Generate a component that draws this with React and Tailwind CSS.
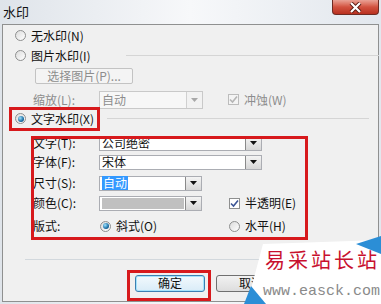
const FONT = { fontFamily: '"Noto Sans CJK SC", "Liberation Sans", sans-serif' };

function Radio({ checked }) {
  return (
    <span className="w-[11px] h-[11px] rounded-full border border-[#8e8f8f] bg-gradient-to-br from-[#dcdcdc] to-[#ffffff] flex items-center justify-center shrink-0">
      {checked && (
        <span className="w-[6px] h-[6px] rounded-full bg-[radial-gradient(circle_at_35%_35%,#9ee3ff,#1d6fa5_60%,#0b3f66)]" />
      )}
    </span>
  );
}

function Check({ checked, disabled }) {
  return (
    <span
      className={
        'w-[11px] h-[11px] border flex items-center justify-center shrink-0 ' +
        (disabled ? 'border-[#bcbcbc] bg-[#f4f4f4]' : 'border-[#8e8f8f] bg-white')
      }
    >
      {checked && (
        <svg width="9" height="9" viewBox="0 0 9 9">
          <path
            d="M1 4.5 L3.5 7 L8 1.5"
            fill="none"
            stroke={disabled ? '#b5b5b5' : '#3c5596'}
            strokeWidth="1.6"
          />
        </svg>
      )}
    </span>
  );
}

function Arrow({ disabled }) {
  return (
    <span
      className={
        'w-[16px] h-full border-l flex items-center justify-center shrink-0 ' +
        (disabled
          ? 'border-[#d0d0d0] bg-[#f2f2f2]'
          : 'border-[#8a8a8a] bg-gradient-to-b from-[#f4f4f4] to-[#d6d6d6]')
      }
    >
      <svg width="7" height="4" viewBox="0 0 7 4">
        <path d="M0 0 H7 L3.5 4 Z" fill={disabled ? '#a8a8a8' : '#111'} />
      </svg>
    </span>
  );
}

function Combo({ width, height = 15, children, disabled }) {
  return (
    <div
      className={
        'flex items-stretch border shrink-0 ' +
        (disabled ? 'border-[#c9c9c9] bg-[#f7f7f7]' : 'border-[#abadb3] bg-white')
      }
      style={{ width, height }}
    >
      <div className="flex-1 flex items-center pl-[2px] whitespace-nowrap leading-[12px]">{children}</div>
      <Arrow disabled={disabled} />
    </div>
  );
}

export default function App() {
  return (
    <div
      className="w-[381px] h-[304px] relative overflow-hidden bg-gradient-to-r from-[#dfe4ea] via-[#f7f8fa] to-[#e2e7ed] text-[12px] leading-none text-[#111] whitespace-nowrap"
      style={FONT}
    >
      {/* title bar */}
      <div className="h-[24px] flex justify-between items-start">
        <span className="pl-[3px] pt-[5px] text-[13px]">水印</span>
        <div className="mr-[2px] w-[47px] h-[15px] rounded-b-[4px] border border-t-0 border-[#6e2a22] bg-gradient-to-b from-[#e9a195] via-[#d2513f] to-[#b8301f] flex items-center justify-center">
          <svg width="13" height="11" viewBox="0 0 13 11">
            <path d="M2 1 L11 10 M11 1 L2 10" stroke="#5a1a12" strokeWidth="4" />
            <path d="M2 1 L11 10 M11 1 L2 10" stroke="#fff" strokeWidth="2.2" />
          </svg>
        </div>
      </div>

      {/* panel */}
      <div className="mx-[2px] h-[278px] border border-[#8f9090] bg-[#f0f0f0] flex flex-col">
        <div className="mt-[2px] h-[18px] flex items-center pl-[12px] gap-[5px]">
          <Radio />
          <span>无水印(N)</span>
        </div>

        <div className="mt-[2px] h-[18px] flex items-center pl-[12px] gap-[5px]">
          <Radio />
          <span className="shrink-0">图片水印(I)</span>
          <div className="ml-[30px] w-[253px] h-[2px] border-t border-[#d5d5d5] border-b-white shrink-0" />
        </div>

        <div className="mt-[3px] h-[16px] ml-[32px] w-[98px] border border-[#c3c3c3] rounded-[2px] bg-[#f4f4f4] flex items-center justify-center text-[#8d8d8d]">
          选择图片(P)...
        </div>

        <div className="mt-[7px] h-[18px] flex items-center">
          <span className="ml-[30px] w-[66px] text-[#8d8d8d] shrink-0">缩放(L):</span>
          <Combo width={104} height={18} disabled>
            <span className="text-[#8d8d8d]">自动</span>
          </Combo>
          <div className="ml-[25px] flex items-center gap-[5px] text-[#8d8d8d]">
            <Check checked disabled />
            <span>冲蚀(W)</span>
          </div>
        </div>

        <div className="mt-[1px] h-[18px] flex items-center">
          <div className="ml-[9px] w-[85px] h-full flex items-center pl-[3px] gap-[5px] outline-[3px] outline-solid outline-[#d7191c] shrink-0">
            <Radio checked />
            <span>文字水印(X)</span>
          </div>
          <div className="ml-[10px] w-[262px] border-t border-[#d5d5d5] shrink-0" />
        </div>

        {/* text watermark group */}
        <div className="mt-[8px] ml-[28px] w-[277px] h-[105px] flex flex-col outline-[3px] outline-solid outline-offset-[-3px] outline-[#d7191c]">
          <div className="h-[15px] flex items-center">
            <span className="pl-[2px] w-[68px] shrink-0">文字(T):</span>
            <Combo width={163}>公司绝密</Combo>
          </div>
          <div className="mt-[4px] h-[15px] flex items-center">
            <span className="pl-[2px] w-[68px] shrink-0">字体(F):</span>
            <Combo width={163}>宋体</Combo>
          </div>
          <div className="mt-[6px] h-[15px] flex items-center">
            <span className="pl-[2px] w-[68px] shrink-0">尺寸(S):</span>
            <Combo width={103}>
              <span className="bg-[#3399ff] text-white px-[1px] py-[1px]">自动</span>
            </Combo>
          </div>
          <div className="mt-[5px] h-[15px] flex items-center">
            <span className="pl-[2px] w-[68px] shrink-0">颜色(C):</span>
            <Combo width={103}>
              <span className="w-full h-[11px] mr-[1px] bg-[#c0c0c0]" />
            </Combo>
            <div className="ml-[27px] flex items-center gap-[5px]">
              <Check checked />
              <span>半透明(E)</span>
            </div>
          </div>
          <div className="mt-[8px] h-[15px] flex items-center">
            <span className="pl-[2px] w-[69px] shrink-0">版式:</span>
            <div className="w-[129px] flex items-center gap-[5px] shrink-0">
              <Radio checked />
              <span>斜式(O)</span>
            </div>
            <div className="flex items-center gap-[5px]">
              <Radio />
              <span>水平(H)</span>
            </div>
          </div>
        </div>

        <div className="mt-[19px] ml-[22px] w-[340px] h-[2px] border-t border-[#d2d8dd] border-b-white" />

        <div className="mt-[9px] flex items-start">
          <div className="ml-[124px] w-[84px] h-[31px] pl-[8px] pt-[5px] outline-[3px] outline-solid outline-offset-[-3px] outline-[#d7191c] shrink-0">
            <div className="w-[70px] h-[17px] rounded-[3px] border border-[#3c7fb1] bg-gradient-to-b from-[#f2f9fd] to-[#d9ecf8] flex items-center justify-center shadow-[inset_0_0_0_1px_#a5e3fb]">
              确定
            </div>
          </div>
          <div className="ml-[5px] mt-[5px] w-[70px] h-[17px] rounded-[3px] border border-[#707070] bg-gradient-to-b from-[#f2f2f2] to-[#dddddd] flex items-center justify-center shrink-0">
            取消
          </div>
        </div>
      </div>

      {/* site watermark overlay */}
      <div className="absolute left-[244px] top-[234px] w-[137px] h-[70px]">
        <svg className="absolute inset-0" width="137" height="70" viewBox="0 0 137 70">
          <polygon points="19,10 137,6 137,70 3,70" fill="#ffffff" />
          <polygon points="112,10 137,2 137,20" fill="#2b8ed6" />
          <polygon points="0,70 7,52 22,70" fill="#2b8ed6" />
        </svg>
        <div
          className="absolute left-[21px] top-[16px] text-[20px] tracking-[3px] text-[#c8102e] whitespace-nowrap"
          style={FONT}
        >
          易采站长站
        </div>
        <div
          className="absolute left-[19px] top-[50px] text-[15px] text-[#8a8a8a] whitespace-nowrap"
          style={{ fontFamily: '"Liberation Mono", monospace' }}
        >
          www.easck.com
        </div>
      </div>
    </div>
  );
}
